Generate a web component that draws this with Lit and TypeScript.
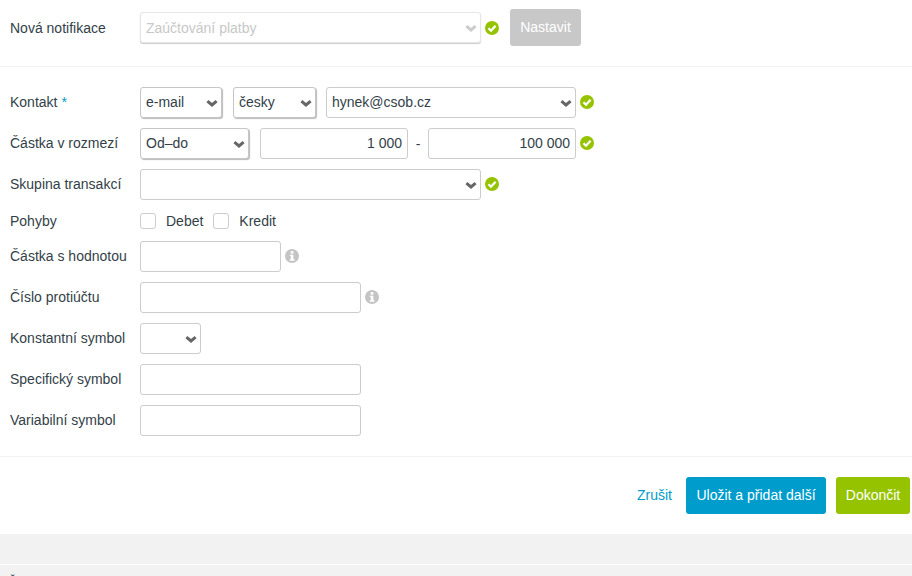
import { LitElement, html, css } from "lit";
import { customElement } from "lit/decorators.js";

const chev = html`<svg class="chev" width="14" height="9" viewBox="0 0 14 9"><path d="M3.4 2.2 L8 6 L12.6 2.2" fill="none" stroke="currentColor" stroke-width="3"/></svg>`;
const ok = html`<svg class="ic" width="14" height="14" viewBox="0 0 14 14"><circle cx="7" cy="7" r="7" fill="#95c300"/><path d="M3.5 7.2 L6 9.7 L10.6 4.8" fill="none" stroke="#fff" stroke-width="2.3"/></svg>`;
const info = html`<svg class="ic" width="14" height="14" viewBox="0 0 14 14"><circle cx="7" cy="7" r="7" fill="#c4c4c4"/><rect x="5.7" y="2.2" width="2.7" height="2.5" fill="#fff"/><path d="M4.8 5.7 H8.4 V10.2 H9.5 V11.7 H4.8 V10.2 H5.8 V7.1 H4.8 Z" fill="#fff"/></svg>`;

@customElement("app-root")
export class AppRoot extends LitElement {
  static styles = css`
    :host { display: block; width: 912px; height: 576px; overflow: hidden; background: #fff; font-family: "Liberation Sans", Arial, sans-serif; font-size: 14px; color: #333f48; }
    .top { box-sizing: border-box; padding: 9px 0 0 10px; display: flex; align-items: flex-start; border-bottom: 1px solid #f2f2f2; height: 67px; }
    .top .label, .top .sel { margin-top: 3px; line-height: 31px; }
    .top .label { line-height: 33px; }
    .top .ic { margin-top: 12px; }
    .label { width: 130px; flex: none; height: 31px; line-height: 31px; white-space: nowrap; }
    .req { color: #009ccc; }
    .form { padding: 20px 0 0 10px; height: 390px; box-sizing: border-box; display: flex; flex-direction: column; gap: 10px; border-bottom: 1px solid #f2f2f2; }
    .row { display: flex; align-items: center; height: 31px; }
    .row .ic { margin-top: -1px; }
    .row.check { height: 16px; margin-top: 3px; margin-bottom: 2px; }
    .row.check .label { height: 16px; line-height: 16px; }
    .sel { position: relative; height: 31px; box-sizing: border-box; border: 1px solid #ccc; border-radius: 3px; padding-left: 5px; line-height: 29px; background: #fff; flex: none; }
    .sel.raised { border-color: #c6c6c6; box-shadow: 1px 1px 1px #bbb; }
    .sel .chev { position: absolute; right: 3px; top: 11px; color: #666; }
    .sel.off { color: #c8c8c8; border-color: #e6e6e6; box-shadow: 0 1px 1px #ccc; }
    .sel.off .chev { color: #ccc; }
    .input { height: 31px; box-sizing: border-box; border: 1px solid #ccc; border-radius: 3px; background: #fff; line-height: 29px; padding: 0 5px; text-align: right; flex: none; }
    .ic { flex: none; margin-left: 4px; }
    .w1 { width: 341px; } .w2 { width: 82px; } .w3 { width: 83px; } .w4 { width: 250px; } .w5 { width: 109px; }
    .w6 { width: 148px; } .w7 { width: 148px; } .w8 { width: 141px; } .w9 { width: 221px; } .w10 { width: 61px; }
    .g11 { margin-left: 11px; }
    .g10 { margin-left: 10px; }
    .dash { width: 20px; text-align: center; flex: none; }
    .cb { width: 16px; height: 16px; box-sizing: border-box; border: 1px solid #ccc; border-radius: 3px; flex: none; }
    .cbt { margin-left: 10px; margin-right: 10px; }
    .actions { height: 77px; box-sizing: border-box; padding: 20px 2px 0 0; display: flex; justify-content: flex-end; align-items: flex-start; }
    .link { color: #009ccc; line-height: 37px; margin-right: 14px; }
    .btn { height: 37px; line-height: 37px; border-radius: 3px; color: #fff; text-align: center; box-sizing: border-box; flex: none; }
    .blue { background: #009ccc; width: 140px; margin-right: 10px; }
    .green { background: #95c300; width: 74px; }
    .grey { background: #c8c8c8; width: 71px; margin-left: 11px; }
    .band { height: 30px; background: #f2f2f2; }
    .foot { height: 11px; margin-top: 1px; background: #f2f2f2; padding-left: 8px; font-size: 12px; line-height: 34px; overflow: hidden; }
  `;

  render() {
    return html`
      <div class="top">
        <div class="label">Nová notifikace</div>
        <div class="sel off w1">Zaúčtování platby${chev}</div>
        ${ok}
        <div class="btn grey">Nastavit</div>
      </div>
      <div class="form">
        <div class="row">
          <div class="label">Kontakt <span class="req">*</span></div>
          <div class="sel raised w2">e-mail${chev}</div>
          <div class="sel raised w3 g11">česky${chev}</div>
          <div class="sel w4 g10">hynek@csob.cz${chev}</div>
          ${ok}
        </div>
        <div class="row">
          <div class="label">Částka v rozmezí</div>
          <div class="sel raised w5">Od–do${chev}</div>
          <div class="input w6 g11">1 000</div>
          <div class="dash">-</div>
          <div class="input w7">100 000</div>
          ${ok}
        </div>
        <div class="row">
          <div class="label">Skupina transakcí</div>
          <div class="sel w1">${chev}</div>
          ${ok}
        </div>
        <div class="row check">
          <div class="label">Pohyby</div>
          <div class="cb"></div><div class="cbt">Debet</div>
          <div class="cb"></div><div class="cbt">Kredit</div>
        </div>
        <div class="row">
          <div class="label">Částka s hodnotou</div>
          <div class="input w8"></div>${info}
        </div>
        <div class="row">
          <div class="label">Číslo protiúčtu</div>
          <div class="input w9"></div>${info}
        </div>
        <div class="row">
          <div class="label">Konstantní symbol</div>
          <div class="sel w10">${chev}</div>
        </div>
        <div class="row">
          <div class="label">Specifický symbol</div>
          <div class="input w9"></div>
        </div>
        <div class="row">
          <div class="label">Variabilní symbol</div>
          <div class="input w9"></div>
        </div>
      </div>
      <div class="actions">
        <div class="link">Zrušit</div>
        <div class="btn blue">Uložit a přidat další</div>
        <div class="btn green">Dokončit</div>
      </div>
      <div class="band"></div>
      <div class="foot">Č</div>
    `;
  }
}
